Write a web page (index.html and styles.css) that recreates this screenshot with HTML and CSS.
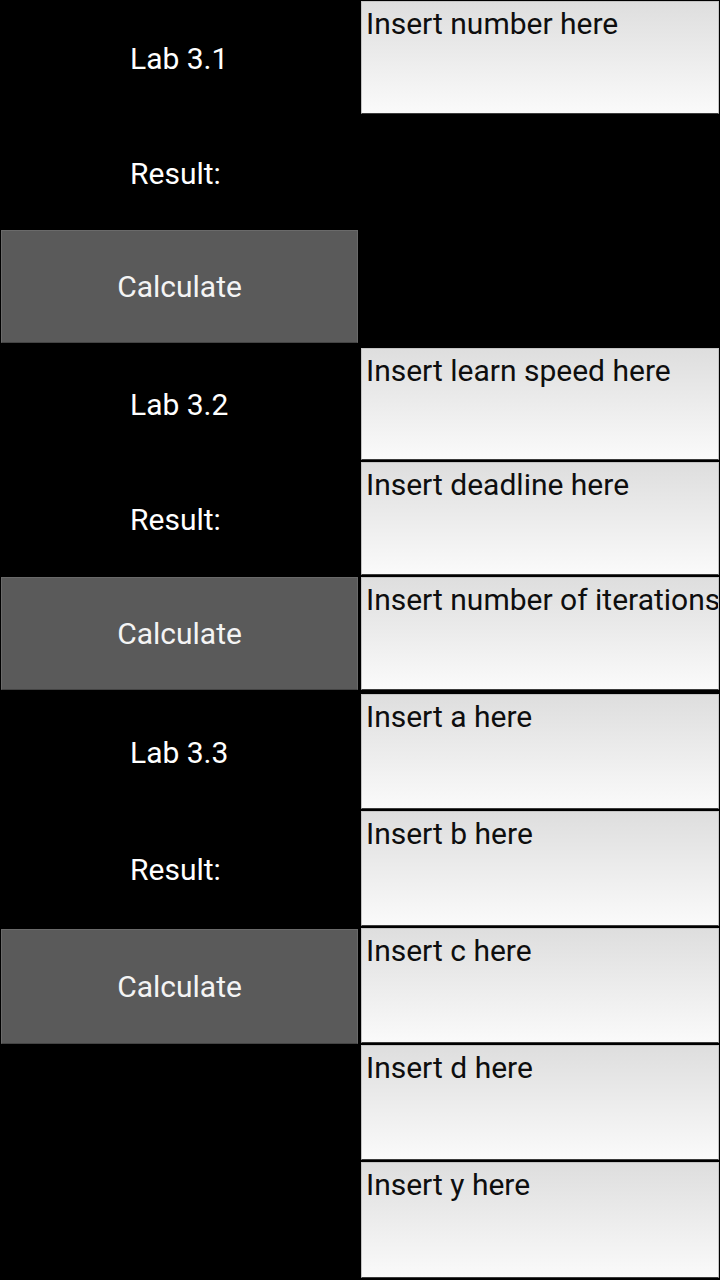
FILE: index.html
```html
<!DOCTYPE html>
<html>
<head>
<meta charset="utf-8">
<link rel="stylesheet" href="styles.css">
</head>
<body>
<main class="app">
  <section class="lab lab-a">
    <div class="label">Lab 3.1</div>
    <div class="field">Insert number here</div>
    <div class="label">Result:</div>
    <div class="blank"></div>
    <div class="btn">Calculate</div>
    <div class="blank"></div>
  </section>
  <section class="lab lab-b">
    <div class="label">Lab 3.2</div>
    <div class="field">Insert learn speed here</div>
    <div class="label">Result:</div>
    <div class="field">Insert deadline here</div>
    <div class="btn">Calculate</div>
    <div class="field">Insert number of iterations here</div>
  </section>
  <section class="lab lab-c">
    <div class="label">Lab 3.3</div>
    <div class="field">Insert a here</div>
    <div class="label">Result:</div>
    <div class="field">Insert b here</div>
    <div class="btn">Calculate</div>
    <div class="field">Insert c here</div>
    <div class="blank"></div>
    <div class="field">Insert d here</div>
    <div class="blank"></div>
    <div class="field">Insert y here</div>
  </section>
</main>
</body>
</html>
```
FILE: styles.css
```css
html, body {
  margin: 0;
  padding: 0;
  background: #000;
}
body {
  width: 720px;
  height: 1280px;
  overflow: hidden;
  font-family: Roboto, "Noto Sans", sans-serif;
  font-size: 30px;
}
.app {
  display: flex;
  flex-direction: column;
}
.lab {
  display: grid;
  grid-template-columns: 360px 360px;
}
.lab-a {
  grid-template-rows: 115px 115px 115px;
  margin-bottom: 2px;
}
.lab-b {
  grid-template-rows: 114px 115px 115px;
  margin-bottom: 2px;
}
.lab-c {
  grid-template-rows: 117px 117px 117px 117px 118px;
}
.label {
  color: #fff;
  display: flex;
  align-items: center;
  padding-left: 130px;
  padding-top: 1px;
}
.field {
  margin: 1px;
  border: 1px solid #c4c4c4;
  border-bottom-color: #3c3c3c;
  background: linear-gradient(#dedede, #fafafa);
  color: #0e0e0e;
  padding: 4px 0 0 4px;
  white-space: nowrap;
  overflow: hidden;
  line-height: 35px;
}
.btn {
  background: #5a5a5a;
  border: 1px solid #6a6a6a;
  border-bottom-color: #444;
  color: #f4f4f4;
  display: flex;
  align-items: center;
  justify-content: center;
}
.lab-a .btn {
  margin: 0 2px 2px 1px;
}
.lab-b .btn {
  margin: 1px 2px 1px 1px;
}
.lab-c .btn {
  margin: 2px 2px 0 1px;
}
```
